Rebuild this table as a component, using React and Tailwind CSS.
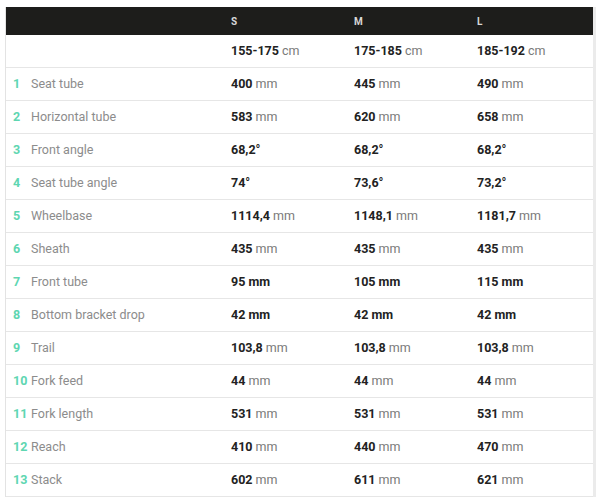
import React from "react";

const rows = [
  ["1", "Seat tube", [["400", " mm"], ["445", " mm"], ["490", " mm"]]],
  ["2", "Horizontal tube", [["583", " mm"], ["620", " mm"], ["658", " mm"]]],
  ["3", "Front angle", [["68,2°", ""], ["68,2°", ""], ["68,2°", ""]]],
  ["4", "Seat tube angle", [["74°", ""], ["73,6°", ""], ["73,2°", ""]]],
  ["5", "Wheelbase", [["1114,4", " mm"], ["1148,1", " mm"], ["1181,7", " mm"]]],
  ["6", "Sheath", [["435", " mm"], ["435", " mm"], ["435", " mm"]]],
  ["7", "Front tube", [["95 mm", ""], ["105 mm", ""], ["115 mm", ""]]],
  ["8", "Bottom bracket drop", [["42 mm", ""], ["42 mm", ""], ["42 mm", ""]]],
  ["9", "Trail", [["103,8", " mm"], ["103,8", " mm"], ["103,8", " mm"]]],
  ["10", "Fork feed", [["44", " mm"], ["44", " mm"], ["44", " mm"]]],
  ["11", "Fork length", [["531", " mm"], ["531", " mm"], ["531", " mm"]]],
  ["12", "Reach", [["410", " mm"], ["440", " mm"], ["470", " mm"]]],
  ["13", "Stack", [["602", " mm"], ["611", " mm"], ["621", " mm"]]],
];

function Val({ v }) {
  return (
    <div className="flex items-center px-[11px] pt-[1px] whitespace-pre">
      <span className="font-bold text-[#222]">{v[0]}</span>
      <span className="text-[#7a7a7a]">{v[1]}</span>
    </div>
  );
}

export default function App() {
  return (
    <div
      className="w-[600px] h-[498px] bg-white pt-[7px] pl-[5px] overflow-hidden text-[12.5px]"
      style={{ fontFamily: "Roboto, 'Noto Sans', sans-serif" }}
    >
      <div className="w-[591px] border-l border-[#e3e3e3] border-r-[3px] border-r-[#ebebeb]">
        <div className="grid grid-cols-[214px_123px_123px_1fr] h-[28px] bg-[#1d1d1b] text-[10px] font-bold text-[#d8d8d8] items-center">
          <div></div>
          <div className="px-[11px] pt-[1px]">S</div>
          <div className="px-[11px] pt-[1px]">M</div>
          <div className="px-[11px] pt-[1px]">L</div>
        </div>
        <div className="grid grid-cols-[214px_123px_123px_1fr] h-[33px] border-b border-[#e6e6e6]">
          <div></div>
          <Val v={["155-175", " cm"]} />
          <Val v={["175-185", " cm"]} />
          <Val v={["185-192", " cm"]} />
        </div>
        {rows.map(([n, label, vals]) => (
          <div
            key={n}
            className="grid grid-cols-[214px_123px_123px_1fr] h-[33px] border-b border-[#e6e6e6]"
          >
            <div className="flex items-center pl-[7px] pt-[1px]">
              <span className="w-[18px] font-bold text-[#5ed6b1]">{n}</span>
              <span className="text-[#8c8c8c]">{label}</span>
            </div>
            {vals.map((v, i) => (
              <Val key={i} v={v} />
            ))}
          </div>
        ))}
      </div>
    </div>
  );
}
